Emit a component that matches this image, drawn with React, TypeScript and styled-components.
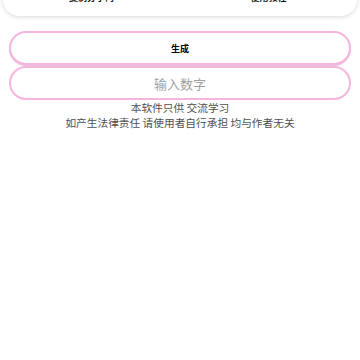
import React from "react";
import styled, { createGlobalStyle } from "styled-components";

const Global = createGlobalStyle`
  html, body {
    margin: 0;
    padding: 0;
    background: #ffffff;
    font-family: "Noto Sans CJK SC", "Noto Sans", sans-serif;
  }
`;

const App = () => {
  return (
    <Page>
      <Global />
      <TopCard>
        <Tab>复制分享码</Tab>
        <Tab>使用教程</Tab>
      </TopCard>

      <Form>
        <GenerateButton>生成</GenerateButton>
        <NumberInput placeholder="输入数字" />
      </Form>

      <Notice>
        <div>本软件只供 交流学习</div>
        <div>如产生法律责任 请使用者自行承担 均与作者无关</div>
      </Notice>
    </Page>
  );
};

export default App;

const Page = styled.div`
  width: 360px;
  height: 360px;
  overflow: hidden;
  background: #ffffff;
`;

// the tab bar is scrolled up, only the bottom of its labels shows
const TopCard = styled.div`
  margin: -14px 3px 0 3px;
  height: 30px;
  background: #ffffff;
  border-radius: 0 0 16px 16px;
  box-shadow: 0 1px 4px rgba(0, 0, 0, 0.16);
  display: grid;
  grid-template-columns: 1fr 1fr;
`;

const Tab = styled.div`
  font-size: 9px;
  font-weight: 700;
  color: #111111;
  text-align: center;
  line-height: 12px;
  padding-top: 6px;
`;

const Form = styled.div`
  margin-top: 15px;
  padding: 0 9px;
  display: flex;
  flex-direction: column;
  gap: 1px;
`;

const GenerateButton = styled.button`
  height: 34px;
  border: 2px solid #f4b6df;
  border-radius: 17px;
  background: #ffffff;
  box-shadow: 0 1px 1px rgba(220, 140, 190, 0.6);
  font-family: "Noto Sans CJK SC", sans-serif;
  font-size: 9px;
  font-weight: 700;
  color: #000000;
  padding: 0;
`;

const NumberInput = styled.input`
  height: 34px;
  box-sizing: border-box;
  border: 2px solid #f4b6df;
  border-radius: 17px;
  background: #ffffff;
  font-family: "Noto Sans CJK SC", sans-serif;
  font-size: 13px;
  color: #333333;
  text-align: center;
  outline: none;

  &::placeholder {
    color: #a0a0a0;
  }
`;

const Notice = styled.div`
  text-align: center;
  font-size: 10.7px;
  line-height: 15px;
  color: #505050;
`;
